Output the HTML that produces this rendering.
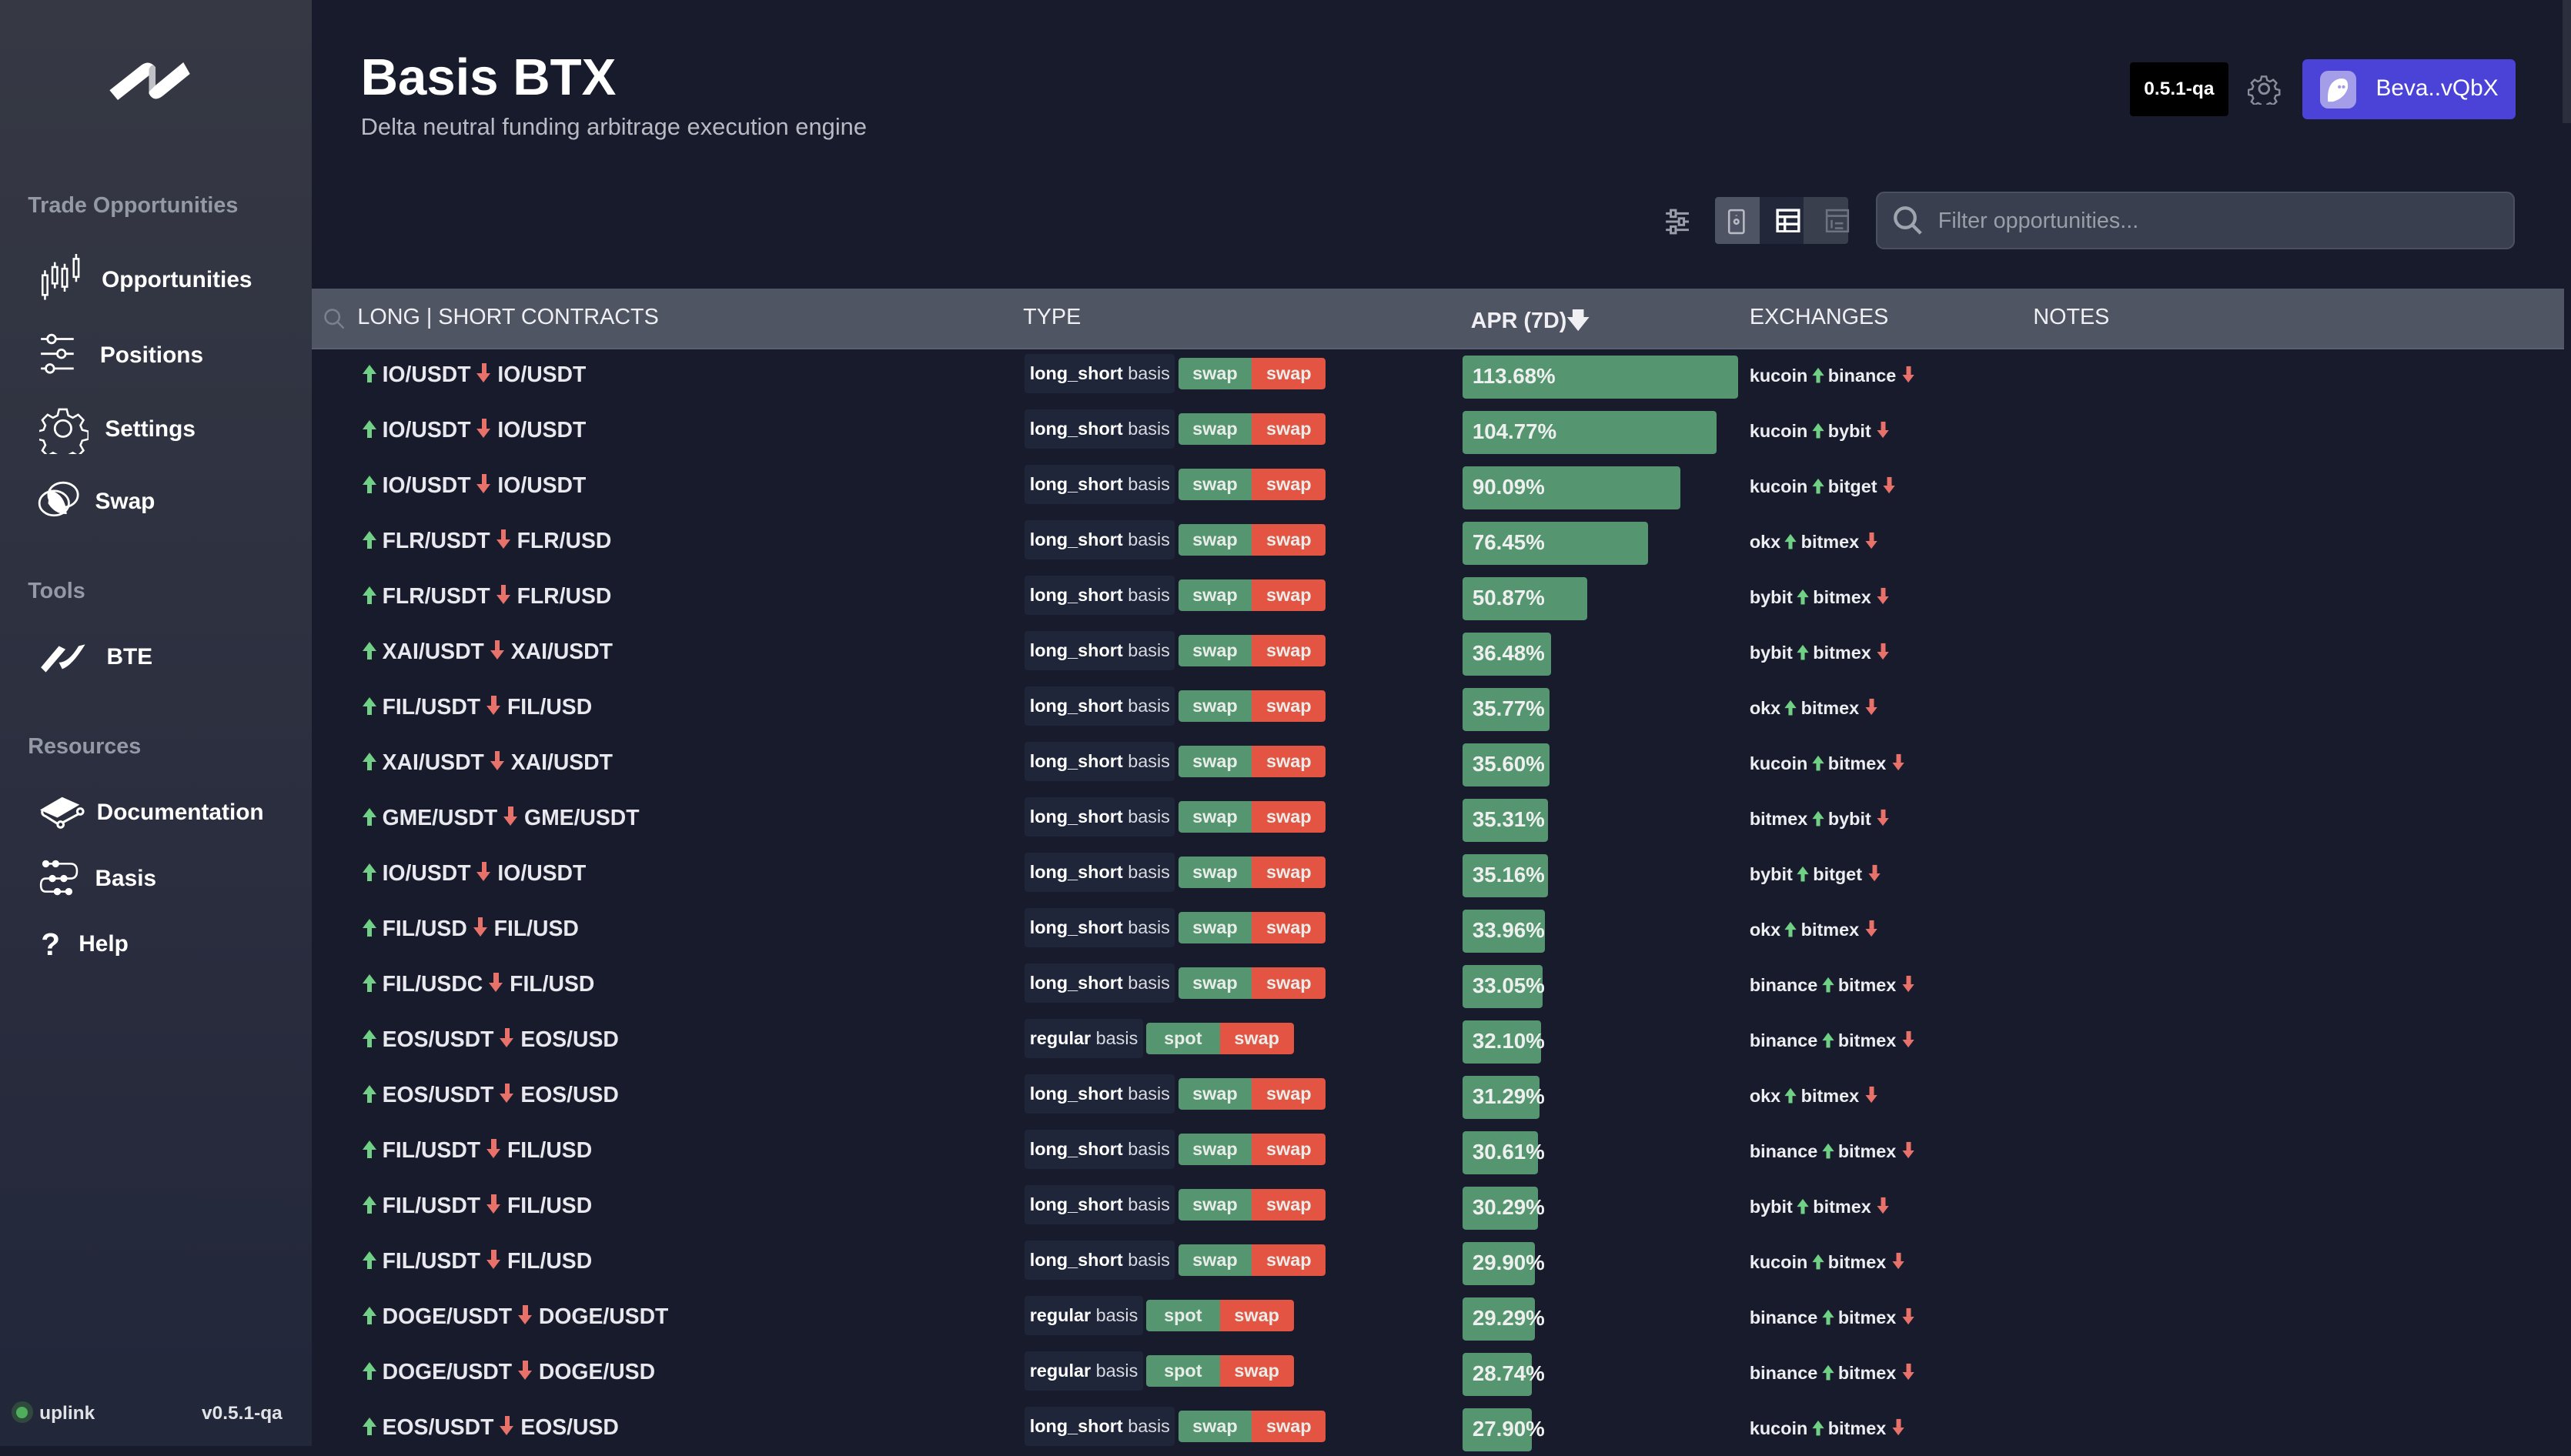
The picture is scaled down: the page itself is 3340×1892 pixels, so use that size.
<!DOCTYPE html>
<html><head><meta charset="utf-8"><style>
html,body{margin:0;padding:0;}
body{width:1568px;height:882px;zoom:2.1301;background:#181b2b;font-family:"Liberation Sans",sans-serif;color:#e6e7ec;overflow:hidden;position:relative;}
.sb{position:absolute;left:0;top:0;width:190px;height:882px;background:linear-gradient(#363944,#22263a);}
.abs{position:absolute;}
.sec{position:absolute;left:17px;font-size:13.5px;font-weight:bold;color:#9499a6;}
.nav{position:absolute;font-size:14px;font-weight:bold;color:#fff;}
.ic{position:absolute;}
.foot{position:absolute;left:0;top:840px;width:190px;height:42px;background:#222839;}
.hdr{position:absolute;left:190px;top:176px;width:1374px;height:36px;background:#4f5563;border-bottom:1px solid #5a6070;}
.hdr span{position:absolute;top:10px;font-size:13.5px;color:#f0f0f4;}
.row{position:absolute;left:190px;width:1374px;height:34px;}
.c{position:absolute;left:221px;top:9px;font-size:13.3px;font-weight:bold;color:#e8e8ee;white-space:nowrap;}
.up{display:inline-block;width:0;height:0;border-left:4.5px solid transparent;border-right:4.5px solid transparent;border-bottom:6px solid #6fd086;position:relative;vertical-align:middle;margin-top:-8px;}
.up:after{content:"";position:absolute;left:-1.5px;top:5px;width:3px;height:6px;background:#6fd086;}
.dn{display:inline-block;position:relative;width:9px;height:12px;vertical-align:middle;margin-top:-3px;}
.dn:before{content:"";position:absolute;left:3px;top:0;width:3px;height:6px;background:#e8716a;}
.dn:after{content:"";position:absolute;left:0;top:6px;border-left:4.5px solid transparent;border-right:4.5px solid transparent;border-top:6px solid #e8716a;}
.t{position:absolute;left:625px;top:5px;height:22px;display:flex;align-items:center;font-size:11px;}
.lab{background:#20263a;height:24px;line-height:24px;padding:0 3px;border-radius:2px;color:#d8dae0;}
.lab b{color:#fff;}
.g,.r{height:19px;line-height:19px;width:45px;text-align:center;font-weight:bold;color:#e8ede9;}
.g{background:#55956f;margin-left:2px;border-radius:2px 0 0 2px;}
.r{background:#e45443;border-radius:0 2px 2px 0;}
.bar{position:absolute;left:892px;top:5px;height:26px;background:#55956f;border-radius:2px;}
.pct{position:absolute;left:898px;top:10px;font-size:13px;font-weight:bold;color:#eef0f0;}
.ex{position:absolute;left:1067px;top:11px;font-size:11px;font-weight:bold;color:#eceef2;white-space:nowrap;}
.ex .up{transform:scale(.85);margin:-6px 2px 0 2px;}
.ex .dn{transform:scale(.85);}
</style></head><body>
<div class="sb"></div>
<svg class="ic" style="left:64px;top:30px" width="56" height="36" viewBox="0 0 56 36"><path d="M3 25 L22 10 Q27 6 31 11 L31 22 L48 8 L52 15 L36 28 Q30 33 27 27 L27 16 L8 31 Z" fill="#fff"/><path d="M27 12 Q29 8 31 11 L31 22 L27 26 Z" fill="#c0c1c6"/></svg>
<div class="sec" style="top:118px">Trade Opportunities</div>
<svg class="ic" style="left:24px;top:155px" width="28" height="30" viewBox="0 0 28 30" fill="none" stroke="#fff" stroke-width="1.2"><rect x="2" y="13" width="3" height="12"/><path d="M3.5 10v3M3.5 25v3"/><rect x="8" y="8" width="3" height="10"/><path d="M9.5 5v3M9.5 18v3"/><rect x="14" y="9" width="3" height="11"/><path d="M15.5 6v3M15.5 20v3"/><rect x="21" y="3" width="3" height="11"/><path d="M22.5 0v3M22.5 14v3"/></svg>
<div class="nav" style="left:62px;top:163px">Opportunities</div>
<svg class="ic" style="left:24px;top:203px" width="28" height="28" viewBox="0 0 28 28" fill="none" stroke="#fff" stroke-width="1.3"><path d="M1 4h4M10 4h11M1 13h10M16 13h5M1 22h3M9 22h12"/><circle cx="7.5" cy="4" r="2.5"/><circle cx="13.5" cy="13" r="2.5"/><circle cx="6.5" cy="22" r="2.5"/></svg>
<div class="nav" style="left:61px;top:209px">Positions</div>
<svg class="ic" style="left:24px;top:247px" width="30" height="30" viewBox="0 0 30 30" fill="none" stroke="#fff" stroke-width="1.3"><circle cx="14.5" cy="14.5" r="5"/><path d="M12 2h5l1 4 3 1.5 3.5-2 3.5 3.5-2 3.5 1.2 3 4 1v5l-4 1-1.2 3 2 3.5-3.5 3.5-3.5-2-3 1.5-1 4h-5l-1-4-3-1.5-3.5 2-3.5-3.5 2-3.5-1.2-3-4-1v-5l4-1 1.2-3-2-3.5 3.5-3.5 3.5 2 3-1.5z" transform="scale(.93) translate(1 1)"/></svg>
<div class="nav" style="left:64px;top:254px">Settings</div>
<svg class="ic" style="left:23px;top:293px" width="28" height="24" viewBox="0 0 28 24" fill="none" stroke="#fff" stroke-width="1.3"><ellipse cx="10" cy="14" rx="9" ry="7.5"/><ellipse cx="15.5" cy="9" rx="9" ry="7.5"/><path d="M8 7 Q16 9 17 20 Q11 20 7 14Z" fill="#fff"/></svg>
<div class="nav" style="left:58px;top:298px">Swap</div>
<div class="sec" style="top:353px">Tools</div>
<svg class="ic" style="left:24px;top:390px" width="30" height="22" viewBox="0 0 30 22"><path d="M1 17 L12 4 L16 6 L4 20Z M14 18 Q20 16 28 3 L24 4 Q18 14 12 14 Z" fill="#fff"/></svg>
<div class="nav" style="left:65px;top:393px">BTE</div>
<div class="sec" style="top:448px">Resources</div>
<svg class="ic" style="left:24px;top:484px" width="28" height="22" viewBox="0 0 28 22" fill="none" stroke="#fff" stroke-width="1.4"><path d="M2 10 L14 3 L23 7 L11 14 Z" fill="#fff"/><path d="M2 10 Q1 13 4 14 L12 19 L25 12"/><circle cx="13" cy="19" r="1.8" fill="#22263a"/><circle cx="25" cy="11" r="1.8" fill="#22263a"/></svg>
<div class="nav" style="left:59px;top:488px">Documentation</div>
<svg class="ic" style="left:24px;top:524px" width="26" height="24" viewBox="0 0 26 24" fill="none" stroke="#fff" stroke-width="1.2"><path d="M4 3h15q4 0 4 4.5t-4 4.5H4q-3 0-3 4t3 4h14"/><circle cx="4" cy="3" r="1.6" fill="#fff"/><circle cx="10" cy="3" r="1.6" fill="#fff"/><circle cx="8" cy="12" r="1.6" fill="#fff"/><circle cx="15" cy="12" r="1.6" fill="#fff"/><circle cx="11" cy="20" r="1.6" fill="#fff"/><circle cx="18" cy="20" r="1.6" fill="#fff"/></svg>
<div class="nav" style="left:58px;top:528px">Basis</div>
<div class="nav" style="left:25px;top:565px;font-size:19px">?</div>
<div class="nav" style="left:48px;top:568px">Help</div>
<div class="foot"></div>
<div class="abs" style="left:7px;top:855px;width:13px;height:13px;border-radius:50%;background:#2f4a3c"></div>
<div class="abs" style="left:10px;top:858px;width:7px;height:7px;border-radius:50%;background:#4fae5c"></div>
<div class="abs" style="left:24px;top:856px;font-size:11.5px;font-weight:bold;color:#e0e2e6">uplink</div>
<div class="abs" style="left:123px;top:856px;font-size:11.5px;font-weight:bold;color:#e0e2e6">v0.5.1-qa</div>

<div class="abs" style="left:220px;top:29px;font-size:31.5px;font-weight:bold;color:#fff">Basis BTX</div>
<div class="abs" style="left:220px;top:69px;font-size:14.5px;color:#b8bbc4">Delta neutral funding arbitrage execution engine</div>
<div class="abs" style="left:1299px;top:38px;width:60px;height:33px;background:#000;border-radius:2px;color:#fff;font-size:11.5px;font-weight:bold;text-align:center;line-height:33px">0.5.1-qa</div>
<svg class="abs" style="left:1371px;top:44px" width="20" height="20" viewBox="0 0 30 30" fill="none" stroke="#8a8e9a" stroke-width="2"><circle cx="15" cy="15" r="4.5"/><path d="M12.5 2h5l1 4 3 1.5 3.5-2 3.5 3.5-2 3.5 1.2 3 4 1v5l-4 1-1.2 3 2 3.5-3.5 3.5-3.5-2-3 1.5-1 4h-5l-1-4-3-1.5-3.5 2-3.5-3.5 2-3.5-1.2-3-4-1v-5l4-1 1.2-3-2-3.5 3.5-3.5 3.5 2 3-1.5z" transform="scale(.85) translate(2.5 2.5)"/></svg>
<div class="abs" style="left:1404px;top:36px;width:130px;height:37px;background:#4b43d8;border-radius:3px"></div>
<div class="abs" style="left:1415px;top:43px;width:22px;height:23px;background:#a49ee9;border-radius:5px"></div>
<svg class="abs" style="left:1418px;top:46px" width="16" height="17" viewBox="0 0 16 17"><path d="M2 16 Q1 4 9 2 Q15 1 14 8 Q12 14 5 16Z" fill="#fff"/><circle cx="9" cy="7" r="1" fill="#a49ee9"/><circle cx="11.5" cy="7" r="1" fill="#a49ee9"/></svg>
<div class="abs" style="left:1449px;top:46px;font-size:14px;color:#fff">Beva..vQbX</div>

<svg class="abs" style="left:1015px;top:127px" width="16" height="16" viewBox="0 0 16 16" fill="none" stroke="#9a9ea8" stroke-width="1.4"><path d="M1 3h14M1 8h14M1 13h14"/><rect x="4" y="1" width="3" height="4" fill="#181b2b"/><rect x="9" y="6" width="3" height="4" fill="#181b2b"/><rect x="4" y="11" width="3" height="4" fill="#181b2b"/></svg>
<div class="abs" style="left:1046px;top:120px;width:81px;height:29px;background:#3a3f4e;border-radius:2px"></div>
<div class="abs" style="left:1046px;top:120px;width:27px;height:29px;background:#4e5464;border-radius:2px 0 0 2px"></div>
<div class="abs" style="left:1073px;top:120px;width:27px;height:29px;background:#22273a"></div>
<svg class="abs" style="left:1053px;top:127px" width="12" height="16" viewBox="0 0 12 16" fill="none" stroke="#b8bbc4" stroke-width="1.2"><rect x="1.5" y="1" width="9" height="14" rx="1"/><circle cx="6" cy="8" r="1.3"/><path d="M6 4v0.5"/></svg>
<svg class="abs" style="left:1083px;top:127px" width="15" height="15" viewBox="0 0 15 15" fill="none" stroke="#fff" stroke-width="1.6"><rect x="1" y="1" width="13" height="13"/><path d="M1 5h13M1 9.5h13M5.5 5v9"/></svg>
<svg class="abs" style="left:1113px;top:127px" width="15" height="15" viewBox="0 0 15 15" fill="none" stroke="#6e7380" stroke-width="1.2"><rect x="1" y="1" width="13" height="13"/><path d="M1 4.5h13M4 7v5M6 9h5M6 12h5"/></svg>
<div class="abs" style="left:1144px;top:117px;width:388px;height:33px;background:#3a3f50;border:1px solid #4a5061;border-radius:5px"></div>
<svg class="abs" style="left:1154px;top:125px" width="20" height="20" viewBox="0 0 20 20" fill="none" stroke="#a0a4ae" stroke-width="2"><circle cx="8" cy="8" r="6"/><path d="M12.5 12.5l5 5"/></svg>
<div class="abs" style="left:1182px;top:127px;font-size:13.5px;color:#9a9ea8">Filter opportunities...</div>
<div class="abs" style="left:1563px;top:0;width:5px;height:75px;background:#2a2e3d"></div>

<div class="hdr">
<svg style="position:absolute;left:7px;top:12px" width="13" height="13" viewBox="0 0 13 13" fill="none" stroke="#7a808e" stroke-width="1.2"><circle cx="5.5" cy="5.5" r="4.3"/><path d="M8.5 8.5l4 4"/></svg>
<span style="left:28px">LONG | SHORT CONTRACTS</span>
<span style="left:434px">TYPE</span>
<span style="left:707px;font-weight:bold">APR (7D)&#x1F847;</span>
<span style="left:877px">EXCHANGES</span>
<span style="left:1050px">NOTES</span>
</div>

<div style="position:absolute;left:0;top:212px;width:1568px;">
<div class="row" style="top:0px;left:0"><div class="c"><i class="up"></i> IO/USDT <i class="dn"></i> IO/USDT</div><div class="t"><span class="lab"><b>long_short</b> basis</span><span class="g">swap</span><span class="r">swap</span></div><div class="bar" style="width:168px"></div><div class="pct">113.68%</div><div class="ex">kucoin<i class="up"></i>binance <i class="dn"></i></div></div>
<div class="row" style="top:33.8px;left:0"><div class="c"><i class="up"></i> IO/USDT <i class="dn"></i> IO/USDT</div><div class="t"><span class="lab"><b>long_short</b> basis</span><span class="g">swap</span><span class="r">swap</span></div><div class="bar" style="width:155px"></div><div class="pct">104.77%</div><div class="ex">kucoin<i class="up"></i>bybit <i class="dn"></i></div></div>
<div class="row" style="top:67.6px;left:0"><div class="c"><i class="up"></i> IO/USDT <i class="dn"></i> IO/USDT</div><div class="t"><span class="lab"><b>long_short</b> basis</span><span class="g">swap</span><span class="r">swap</span></div><div class="bar" style="width:133px"></div><div class="pct">90.09%</div><div class="ex">kucoin<i class="up"></i>bitget <i class="dn"></i></div></div>
<div class="row" style="top:101.4px;left:0"><div class="c"><i class="up"></i> FLR/USDT <i class="dn"></i> FLR/USD</div><div class="t"><span class="lab"><b>long_short</b> basis</span><span class="g">swap</span><span class="r">swap</span></div><div class="bar" style="width:113px"></div><div class="pct">76.45%</div><div class="ex">okx<i class="up"></i>bitmex <i class="dn"></i></div></div>
<div class="row" style="top:135.2px;left:0"><div class="c"><i class="up"></i> FLR/USDT <i class="dn"></i> FLR/USD</div><div class="t"><span class="lab"><b>long_short</b> basis</span><span class="g">swap</span><span class="r">swap</span></div><div class="bar" style="width:76px"></div><div class="pct">50.87%</div><div class="ex">bybit<i class="up"></i>bitmex <i class="dn"></i></div></div>
<div class="row" style="top:169px;left:0"><div class="c"><i class="up"></i> XAI/USDT <i class="dn"></i> XAI/USDT</div><div class="t"><span class="lab"><b>long_short</b> basis</span><span class="g">swap</span><span class="r">swap</span></div><div class="bar" style="width:54px"></div><div class="pct">36.48%</div><div class="ex">bybit<i class="up"></i>bitmex <i class="dn"></i></div></div>
<div class="row" style="top:202.8px;left:0"><div class="c"><i class="up"></i> FIL/USDT <i class="dn"></i> FIL/USD</div><div class="t"><span class="lab"><b>long_short</b> basis</span><span class="g">swap</span><span class="r">swap</span></div><div class="bar" style="width:53px"></div><div class="pct">35.77%</div><div class="ex">okx<i class="up"></i>bitmex <i class="dn"></i></div></div>
<div class="row" style="top:236.6px;left:0"><div class="c"><i class="up"></i> XAI/USDT <i class="dn"></i> XAI/USDT</div><div class="t"><span class="lab"><b>long_short</b> basis</span><span class="g">swap</span><span class="r">swap</span></div><div class="bar" style="width:53px"></div><div class="pct">35.60%</div><div class="ex">kucoin<i class="up"></i>bitmex <i class="dn"></i></div></div>
<div class="row" style="top:270.4px;left:0"><div class="c"><i class="up"></i> GME/USDT <i class="dn"></i> GME/USDT</div><div class="t"><span class="lab"><b>long_short</b> basis</span><span class="g">swap</span><span class="r">swap</span></div><div class="bar" style="width:52px"></div><div class="pct">35.31%</div><div class="ex">bitmex<i class="up"></i>bybit <i class="dn"></i></div></div>
<div class="row" style="top:304.2px;left:0"><div class="c"><i class="up"></i> IO/USDT <i class="dn"></i> IO/USDT</div><div class="t"><span class="lab"><b>long_short</b> basis</span><span class="g">swap</span><span class="r">swap</span></div><div class="bar" style="width:52px"></div><div class="pct">35.16%</div><div class="ex">bybit<i class="up"></i>bitget <i class="dn"></i></div></div>
<div class="row" style="top:338px;left:0"><div class="c"><i class="up"></i> FIL/USD <i class="dn"></i> FIL/USD</div><div class="t"><span class="lab"><b>long_short</b> basis</span><span class="g">swap</span><span class="r">swap</span></div><div class="bar" style="width:50px"></div><div class="pct">33.96%</div><div class="ex">okx<i class="up"></i>bitmex <i class="dn"></i></div></div>
<div class="row" style="top:371.8px;left:0"><div class="c"><i class="up"></i> FIL/USDC <i class="dn"></i> FIL/USD</div><div class="t"><span class="lab"><b>long_short</b> basis</span><span class="g">swap</span><span class="r">swap</span></div><div class="bar" style="width:49px"></div><div class="pct">33.05%</div><div class="ex">binance<i class="up"></i>bitmex <i class="dn"></i></div></div>
<div class="row" style="top:405.6px;left:0"><div class="c"><i class="up"></i> EOS/USDT <i class="dn"></i> EOS/USD</div><div class="t"><span class="lab"><b>regular</b> basis</span><span class="g">spot</span><span class="r">swap</span></div><div class="bar" style="width:48px"></div><div class="pct">32.10%</div><div class="ex">binance<i class="up"></i>bitmex <i class="dn"></i></div></div>
<div class="row" style="top:439.4px;left:0"><div class="c"><i class="up"></i> EOS/USDT <i class="dn"></i> EOS/USD</div><div class="t"><span class="lab"><b>long_short</b> basis</span><span class="g">swap</span><span class="r">swap</span></div><div class="bar" style="width:47px"></div><div class="pct">31.29%</div><div class="ex">okx<i class="up"></i>bitmex <i class="dn"></i></div></div>
<div class="row" style="top:473.2px;left:0"><div class="c"><i class="up"></i> FIL/USDT <i class="dn"></i> FIL/USD</div><div class="t"><span class="lab"><b>long_short</b> basis</span><span class="g">swap</span><span class="r">swap</span></div><div class="bar" style="width:46px"></div><div class="pct">30.61%</div><div class="ex">binance<i class="up"></i>bitmex <i class="dn"></i></div></div>
<div class="row" style="top:507px;left:0"><div class="c"><i class="up"></i> FIL/USDT <i class="dn"></i> FIL/USD</div><div class="t"><span class="lab"><b>long_short</b> basis</span><span class="g">swap</span><span class="r">swap</span></div><div class="bar" style="width:46px"></div><div class="pct">30.29%</div><div class="ex">bybit<i class="up"></i>bitmex <i class="dn"></i></div></div>
<div class="row" style="top:540.8px;left:0"><div class="c"><i class="up"></i> FIL/USDT <i class="dn"></i> FIL/USD</div><div class="t"><span class="lab"><b>long_short</b> basis</span><span class="g">swap</span><span class="r">swap</span></div><div class="bar" style="width:44px"></div><div class="pct">29.90%</div><div class="ex">kucoin<i class="up"></i>bitmex <i class="dn"></i></div></div>
<div class="row" style="top:574.6px;left:0"><div class="c"><i class="up"></i> DOGE/USDT <i class="dn"></i> DOGE/USDT</div><div class="t"><span class="lab"><b>regular</b> basis</span><span class="g">spot</span><span class="r">swap</span></div><div class="bar" style="width:44px"></div><div class="pct">29.29%</div><div class="ex">binance<i class="up"></i>bitmex <i class="dn"></i></div></div>
<div class="row" style="top:608.4px;left:0"><div class="c"><i class="up"></i> DOGE/USDT <i class="dn"></i> DOGE/USD</div><div class="t"><span class="lab"><b>regular</b> basis</span><span class="g">spot</span><span class="r">swap</span></div><div class="bar" style="width:42px"></div><div class="pct">28.74%</div><div class="ex">binance<i class="up"></i>bitmex <i class="dn"></i></div></div>
<div class="row" style="top:642.2px;left:0"><div class="c"><i class="up"></i> EOS/USDT <i class="dn"></i> EOS/USD</div><div class="t"><span class="lab"><b>long_short</b> basis</span><span class="g">swap</span><span class="r">swap</span></div><div class="bar" style="width:42px"></div><div class="pct">27.90%</div><div class="ex">kucoin<i class="up"></i>bitmex <i class="dn"></i></div></div>
</div>
</body></html>
